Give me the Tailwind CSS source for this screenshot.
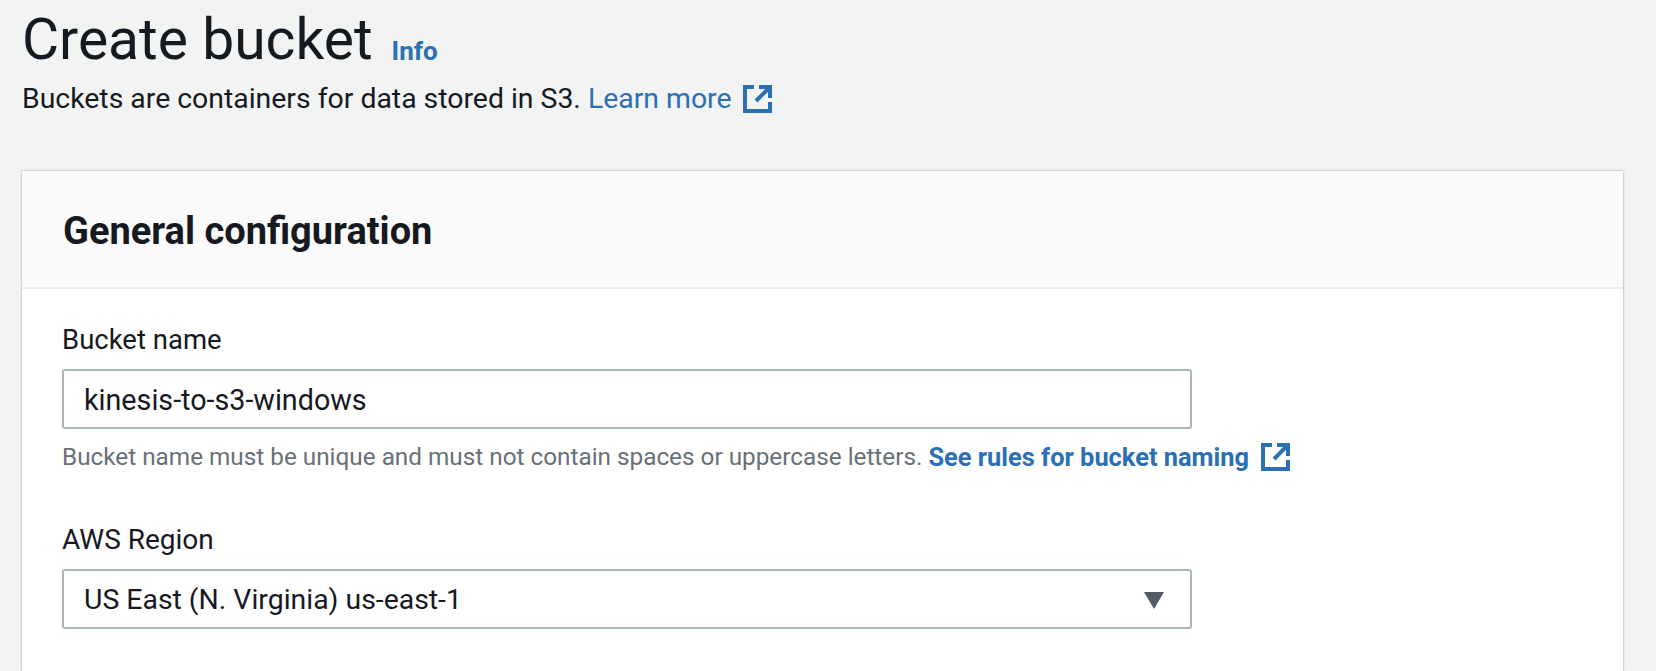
<!DOCTYPE html>
<html><head><meta charset="utf-8"><script src="https://cdn.jsdelivr.net/npm/@tailwindcss/browser@4"></script></head>
<body class="m-0 h-[671px] w-[1656px] overflow-hidden bg-[#f2f3f3] font-['Roboto','Noto_Sans',sans-serif] text-[#16191f]">
<div class="pl-[22px] pr-[33px]">
  <div class="flex h-[80px] items-end gap-[19px] pb-[8px]">
    <h1 class="text-[57px] leading-[64px] font-normal">Create bucket</h1>
    <a class="mb-[7px] text-[26px] leading-[28px] font-bold text-[#2b6fb5]">Info</a>
  </div>
  <p class="flex h-[38px] items-center text-[28.4px] leading-[34px]">Buckets are containers for data stored in S3.&nbsp;<a class="text-[#2b6fb5]">Learn more</a>
    <svg class="ml-[11px]" width="29" height="28" viewBox="0 0 29 28" fill="none" stroke="#2b6fb5" stroke-width="4"><path d="M11 2H2V26H27V17M16 2H27V13M27 2L13 16"/></svg>
  </p>
  <section class="mt-[53px] h-[500px] bg-white shadow-[0_0_2px_rgba(0,28,36,0.45)]">
    <div class="flex h-[118px] items-center border-b-2 border-[#eaeded] bg-[#fafafa] px-[41px] pt-1">
      <h2 class="text-[38px] font-bold leading-10">General configuration</h2>
    </div>
    <div class="px-10 pt-[35px]">
      <label class="block text-[27.5px] leading-8">Bucket name</label>
      <div class="mt-[13px] flex h-[60px] w-[1130px] items-center rounded-[3px] border-2 border-[#aab7b8] bg-white px-5 pt-[3px] text-[28.7px]">kinesis-to-s3-windows</div>
      <p class="mt-[10px] flex h-9 items-center text-[24.3px] text-[#687078]">Bucket name must be unique and must not contain spaces or uppercase letters.&nbsp;<a class="text-[25.4px] font-bold text-[#2b6fb5]">See rules for bucket naming</a>
        <svg class="ml-[12px]" width="29" height="28" viewBox="0 0 29 28" fill="none" stroke="#2b6fb5" stroke-width="4"><path d="M11 2H2V26H27V17M16 2H27V13M27 2L13 16"/></svg>
      </p>
      <label class="mt-[49px] block text-[28px] leading-8">AWS Region</label>
      <div class="mt-[13px] flex h-[60px] w-[1130px] items-center justify-between rounded-[3px] border-2 border-[#aab7b8] bg-white pl-5 pr-[26px] pt-[3px] text-[28.4px]">US East (N. Virginia) us-east-1
        <svg width="20" height="17" viewBox="0 0 20 17"><path d="M0 0H20L10 17Z" fill="#545b64"/></svg>
      </div>
    </div>
  </section>
</div>
</body></html>
